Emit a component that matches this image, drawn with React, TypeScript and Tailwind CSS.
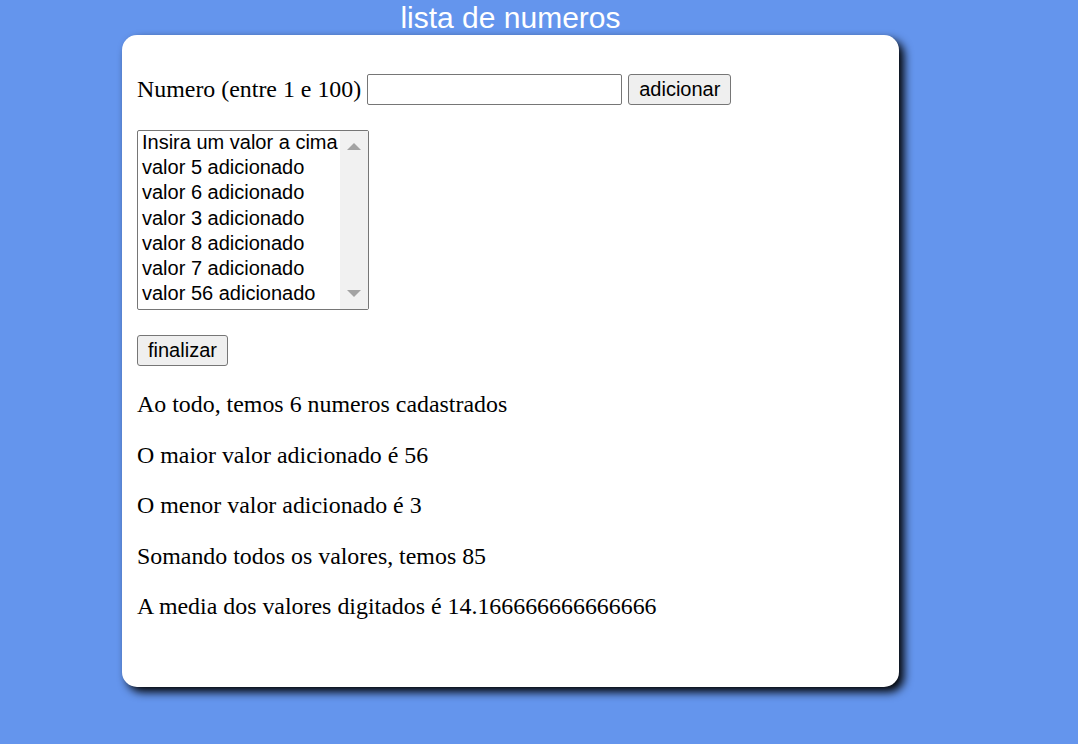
export default function App() {
  const itens = [
    'Insira um valor a cima',
    'valor 5 adicionado',
    'valor 6 adicionado',
    'valor 3 adicionado',
    'valor 8 adicionado',
    'valor 7 adicionado',
    'valor 56 adicionado',
  ];

  const resultados = [
    'Ao todo, temos 6 numeros cadastrados',
    'O maior valor adicionado é 56',
    'O menor valor adicionado é 3',
    'Somando todos os valores, temos 85',
    'A media dos valores digitados é 14.166666666666666',
  ];

  return (
    <div className="min-h-[744px] w-full bg-[#6495ED] font-['Liberation_Serif',serif] text-black">
      <div className="ml-[122px] w-[777px]">
        <h1 className="m-0 text-center font-['Liberation_Sans',Arial,sans-serif] text-[30px] leading-[35px] font-normal text-white">
          lista de numeros
        </h1>

        <div className="h-[652px] rounded-[15px] bg-white pl-[15px] pt-[39px] shadow-[5px_5px_10px_#000]">
          {/* entrada */}
          <div className="flex h-[31px] items-center">
            <label className="text-[23.9px] leading-[27px]">Numero (entre 1 e 100)</label>
            <input
              type="number"
              className="ml-[6px] h-[31px] w-[255px] rounded-[2px] border border-[#767676] bg-white outline-none"
            />
            <button className="ml-[6px] h-[31px] rounded-[3px] border border-[#767676] bg-[#efefef] px-[10px] font-['Liberation_Sans',Arial,sans-serif] text-[20px] leading-[23px]">
              adicionar
            </button>
          </div>

          {/* lista */}
          <div className="mt-[25px] flex h-[180px] w-[232px] rounded-[2px] border border-[#767676] bg-white font-['Liberation_Sans',Arial,sans-serif] text-[20px]">
            <div className="flex-1 overflow-hidden">
              {itens.map((t) => (
                <div key={t} className="h-[25.2px] whitespace-nowrap pl-[4px] leading-[23px]">
                  {t}
                </div>
              ))}
            </div>
            <div className="flex w-[28px] flex-col items-center justify-between bg-[#f1f1f1] py-[12px]">
              <svg width="14" height="7" viewBox="0 0 14 7">
                <path d="M0 7 L7 0 L14 7 Z" fill="#a3a3a3" />
              </svg>
              <svg width="14" height="7" viewBox="0 0 14 7">
                <path d="M0 0 L14 0 L7 7 Z" fill="#a3a3a3" />
              </svg>
            </div>
          </div>

          <button className="mt-[25px] h-[31px] rounded-[3px] border border-[#767676] bg-[#efefef] px-[10px] font-['Liberation_Sans',Arial,sans-serif] text-[20px] leading-[23px]">
            finalizar
          </button>

          {/* resultado */}
          <div className="mt-[25px] flex flex-col gap-[24px]">
            {resultados.map((r) => (
              <p key={r} className="m-0 text-[23.9px] leading-[26.5px]">
                {r}
              </p>
            ))}
          </div>
        </div>
      </div>
    </div>
  );
}
